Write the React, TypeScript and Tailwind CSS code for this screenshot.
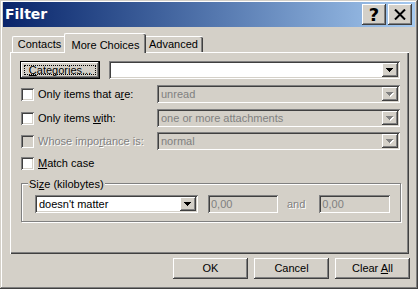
import React from "react";

const raised =
  "bg-[#d4d0c8] shadow-[inset_-1px_-1px_#404040,inset_1px_1px_#ffffff,inset_-2px_-2px_#808080,inset_2px_2px_#d4d0c8]";
const sunken =
  "shadow-[inset_1px_1px_#808080,inset_-1px_-1px_#ffffff,inset_2px_2px_#404040,inset_-2px_-2px_#d4d0c8]";
const etched = "[text-shadow:1px_1px_0_#ffffff]";

const Arrow = ({ disabled }: { disabled?: boolean }) => (
  <div className={`${raised} w-[16px] h-full flex items-center justify-center shrink-0`}>
    <svg width="8" height="5" viewBox="0 0 8 5" shapeRendering="crispEdges">
      {disabled && <path d="M1 1h7v1H1zM2 2h5v1H2zM3 3h3v1H3zM4 4h1v1H4z" fill="#ffffff" />}
      <path
        d="M0 0h7v1H0zM1 1h5v1H1zM2 2h3v1H2zM3 3h1v1H3z"
        fill={disabled ? "#808080" : "#000000"}
      />
    </svg>
  </div>
);

type ComboProps = {
  width: string;
  text?: string;
  disabled?: boolean;
};

const Combo = ({ width, text, disabled }: ComboProps) => (
  <div
    className={`${sunken} ${width} ${
      disabled ? "bg-[#d4d0c8] text-[#808080]" : "bg-white text-black"
    } h-[18px] p-[2px] flex items-center shrink-0`}
  >
    <span className="flex-1 pl-[2px] leading-none truncate">{text}</span>
    <Arrow disabled={disabled} />
  </div>
);

const Check = ({ disabled }: { disabled?: boolean }) => (
  <div
    className={`${sunken} ${disabled ? "bg-[#d4d0c8]" : "bg-white"} w-[13px] h-[13px] shrink-0`}
  />
);

type RowProps = {
  before: string;
  key_: string;
  after: string;
  combo: string;
  disabled?: boolean;
};

const OptionRow = ({ before, key_, after, combo, disabled }: RowProps) => (
  <div className="flex items-center h-[18px]">
    <div className="w-[137px] flex items-center">
      <div className="ml-[1px]">
        <Check disabled={disabled} />
      </div>
      <span className={`ml-[4px] ${disabled ? `text-[#808080] ${etched}` : ""}`}>
        {before}
        <span className="underline underline-offset-1">{key_}</span>
        {after}
      </span>
    </div>
    <Combo width="w-[243px]" text={combo} disabled />
  </div>
);

const TitleButton = ({ children }: { children: React.ReactNode }) => (
  <div className={`${raised} w-[24px] h-[21px] flex items-center justify-center`}>{children}</div>
);

export default function App() {
  return (
    <div className="w-[418px] h-[289px] bg-[#d4d0c8] flex flex-col pt-[2px] px-[3px] overflow-hidden shadow-[inset_-1px_-1px_#404040,inset_1px_1px_#d4d0c8,inset_-2px_-2px_#808080,inset_2px_2px_#ffffff] font-['Liberation_Sans',Arial,sans-serif] text-[11px] text-black">
      {/* title bar */}
      <div className="h-[25px] flex items-center justify-between pl-[2px] pr-[3px] bg-linear-to-r from-[#0a246a] to-[#a6caf0]">
        <span className="text-white font-bold text-[14px] font-['DejaVu_Sans',sans-serif]">
          Filter
        </span>
        <div className="flex items-center gap-[2px]">
          <TitleButton>
            <span className="font-bold text-[18px] leading-none font-['DejaVu_Sans',sans-serif]">
              ?
            </span>
          </TitleButton>
          <TitleButton>
            <svg width="12" height="11" viewBox="0 0 12 11">
              <path d="M1 0.5L11 10.5M11 0.5L1 10.5" stroke="#000" strokeWidth="2" />
            </svg>
          </TitleButton>
        </div>
      </div>

      {/* tabs */}
      <div className="mt-[6px] h-[20px] -mb-px pl-[9px] flex items-end relative z-10">
        <div className="w-[54px] h-[16px] mb-px flex items-center justify-center border-t border-l border-white rounded-tl-[2px] bg-[#d4d0c8]">
          Contacts
        </div>
        <div className="-mx-[2px] w-[82px] h-[20px] flex items-start pt-[3px] justify-center border-t border-l border-white rounded-t-[2px] bg-[#d4d0c8] shadow-[inset_-1px_0_#404040,inset_-2px_0_#808080] relative">
          More Choices
        </div>
        <div className="w-[59px] h-[16px] mb-px flex items-center justify-center border-t border-white rounded-tr-[2px] bg-[#d4d0c8] shadow-[inset_-1px_0_#404040,inset_-2px_0_#808080]">
          Advanced
        </div>
      </div>

      {/* panel */}
      <div className="ml-[7px] w-[399px] h-[202px] border-t border-l border-white shadow-[inset_-1px_-1px_#404040,inset_-2px_-2px_#808080] pt-[8px] pl-[9px] flex flex-col">
        <div className="flex items-center gap-[9px] h-[18px]">
          <div className="w-[80px] h-[18px] border border-black bg-[#d4d0c8] shadow-[inset_-1px_-1px_#404040,inset_1px_1px_#ffffff,inset_-2px_-2px_#808080] p-[3px]">
            <div className="w-full h-full border border-dotted border-black flex items-center justify-center leading-none">
              <span>
                <span className="underline underline-offset-1">C</span>ategories...
              </span>
            </div>
          </div>
          <Combo width="w-[291px]" />
        </div>

        <div className="mt-[6px]">
          <OptionRow before="Only items that a" key_="r" after="e:" combo="unread" />
        </div>
        <div className="mt-[6px]">
          <OptionRow before="Only items " key_="w" after="ith:" combo="one or more attachments" />
        </div>
        <div className="mt-[5px]">
          <OptionRow
            before="Whose impo"
            key_="r"
            after="tance is:"
            combo="normal"
            disabled
          />
        </div>

        <div className="mt-[5px] h-[17px] flex items-center">
          <div className="ml-[1px]">
            <Check />
          </div>
          <span className="ml-[4px]">
            <span className="underline underline-offset-1">M</span>atch case
          </span>
        </div>

        {/* size group */}
        <div className="mt-[11px] ml-[1px] w-[380px] h-[39px] border border-[#808080] shadow-[1px_1px_0_#ffffff,inset_1px_1px_0_#ffffff] relative pt-[11px] pl-[13px] flex items-start">
          <span className="absolute -top-[8px] left-[6px] px-[1px] bg-[#d4d0c8]">
            Si<span className="underline underline-offset-1">z</span>e (kilobytes)
          </span>
          <Combo width="w-[163px]" text="doesn't matter" />
          <div className={`${sunken} ml-[10px] w-[70px] h-[18px] flex items-center pl-[3px] text-[#808080]`}>
            0,00
          </div>
          <span className={`ml-[9px] h-[18px] flex items-center text-[#808080] ${etched}`}>and</span>
          <div className={`${sunken} ml-[14px] w-[71px] h-[18px] flex items-center pl-[3px] text-[#808080]`}>
            0,00
          </div>
        </div>
      </div>

      {/* buttons */}
      <div className="mt-[4px] flex justify-end gap-[6px] pr-[5px]">
        <div className={`${raised} w-[75px] h-[21px] flex items-center justify-center`}>OK</div>
        <div className={`${raised} w-[75px] h-[21px] flex items-center justify-center`}>Cancel</div>
        <div className={`${raised} w-[75px] h-[21px] flex items-center justify-center`}>
          <span>
            Clear <span className="underline underline-offset-1">A</span>ll
          </span>
        </div>
      </div>
    </div>
  );
}
